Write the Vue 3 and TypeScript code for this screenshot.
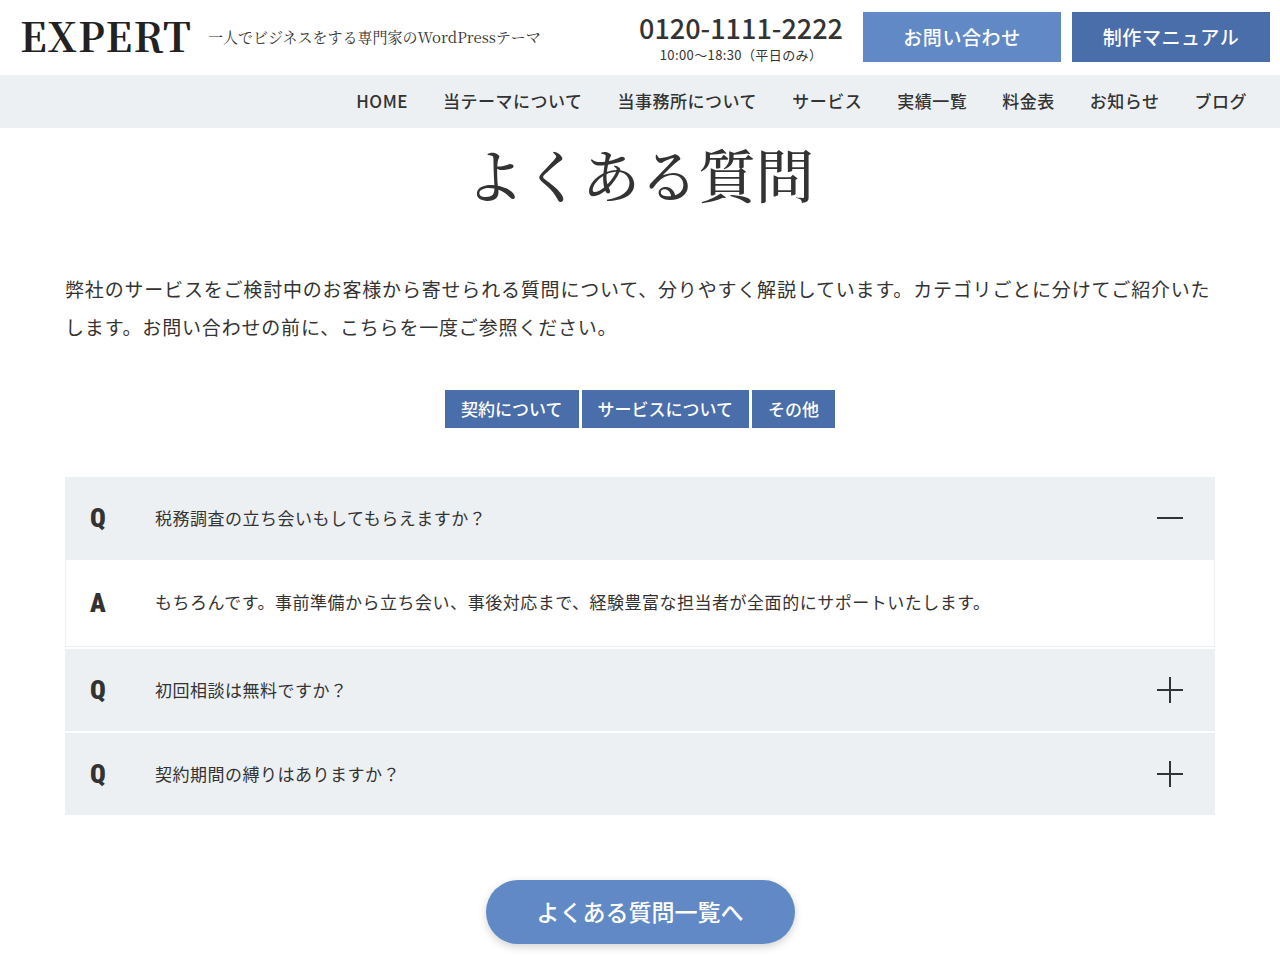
<script setup lang="ts">
import { ref } from 'vue'

interface LinkItem {
  label: string
  href: string
}

interface Faq {
  id: string
  question: string
  answer: string
}

const navItems: LinkItem[] = [
  { label: 'HOME', href: '#home' },
  { label: '当テーマについて', href: '#theme' },
  { label: '当事務所について', href: '#office' },
  { label: 'サービス', href: '#service' },
  { label: '実績一覧', href: '#works' },
  { label: '料金表', href: '#price' },
  { label: 'お知らせ', href: '#news' },
  { label: 'ブログ', href: '#blog' },
]

const categories: LinkItem[] = [
  { label: '契約について', href: '#contract' },
  { label: 'サービスについて', href: '#about-service' },
  { label: 'その他', href: '#other' },
]

const faqs: Faq[] = [
  {
    id: 'audit',
    question: '税務調査の立ち会いもしてもらえますか？',
    answer:
      'もちろんです。事前準備から立ち会い、事後対応まで、経験豊富な担当者が全面的にサポートいたします。',
  },
  { id: 'first', question: '初回相談は無料ですか？', answer: '' },
  { id: 'term', question: '契約期間の縛りはありますか？', answer: '' },
]

const openId = ref<string>('audit')

function toggle(id: string): void {
  openId.value = openId.value === id ? '' : id
}
</script>

<template>
  <div class="page">
    <header class="header">
      <a class="logo" href="#home">EXPERT</a>
      <p class="tagline">一人でビジネスをする専門家のWordPressテーマ</p>
      <div class="tel">
        <a class="tel-number" href="tel:012011112222">0120-1111-2222</a>
        <span class="tel-hours">10:00〜18:30（平日のみ）</span>
      </div>
      <div class="header-actions">
        <a class="header-button" href="#contact">お問い合わせ</a>
        <a class="header-button dark" href="#manual">制作マニュアル</a>
      </div>
    </header>

    <nav class="nav">
      <a v-for="item in navItems" :key="item.href" class="nav-link" :href="item.href">{{ item.label }}</a>
    </nav>

    <main class="main">
      <h1 class="title">よくある質問</h1>
      <p class="lead">
        弊社のサービスをご検討中のお客様から寄せられる質問について、分りやすく解説しています。カテゴリごとに分けてご紹介いたします。お問い合わせの前に、こちらを一度ご参照ください。
      </p>

      <div class="categories">
        <a v-for="c in categories" :key="c.href" class="category" :href="c.href">{{ c.label }}</a>
      </div>

      <div class="faq-list">
        <section v-for="faq in faqs" :key="faq.id" class="faq">
          <button
            class="question"
            type="button"
            :aria-expanded="openId === faq.id"
            @click="toggle(faq.id)"
          >
            <span class="mark">Q</span>
            <span class="text">{{ faq.question }}</span>
            <svg class="sign" viewBox="0 0 26 26" aria-hidden="true">
              <path d="M0 13H26" />
              <path v-if="openId !== faq.id" d="M13 0V26" />
            </svg>
          </button>
          <div v-if="openId === faq.id && faq.answer" class="answer">
            <span class="mark">A</span>
            <p class="text">{{ faq.answer }}</p>
          </div>
        </section>
      </div>

      <a class="more" href="#faq">よくある質問一覧へ</a>
    </main>
  </div>
</template>

<style>
body {
  margin: 0;
  background: #fff;
}
</style>

<style scoped>
.page {
  color: #333;
  font-family: "Noto Sans CJK JP", sans-serif;
  font-size: 17px;
}

.page a {
  color: inherit;
  text-decoration: none;
}

.page p {
  margin: 0;
}

.header {
  display: flex;
  align-items: center;
  padding: 10px 10px 11px 20px;
  white-space: nowrap;
}

.page .logo {
  padding-bottom: 4px;
  color: #222;
  font-family: "Noto Serif CJK JP", "Liberation Serif", serif;
  font-size: 40px;
  font-weight: 700;
  line-height: 46px;
  letter-spacing: 0.03em;
}

.tagline {
  padding: 0 0 2px 16px;
  font-family: "Noto Serif CJK JP", "Liberation Serif", "Noto Sans CJK JP", serif;
  font-size: 15px;
}

.tel {
  display: flex;
  flex-direction: column;
  align-items: center;
  margin-left: auto;
}

.tel-number {
  font-size: 27px;
  font-weight: 500;
  line-height: 36px;
}

.tel-hours {
  font-size: 13px;
  line-height: 18px;
  letter-spacing: 0.03em;
}

.header-actions {
  display: flex;
  gap: 11px;
  margin-left: 20px;
}

.page .header-button {
  width: 198px;
  background: #6189c5;
  color: #fff;
  font-size: 19px;
  font-weight: 500;
  line-height: 50px;
  letter-spacing: 0.03em;
  text-align: center;
}

.page .header-button.dark {
  background: #4a6ea9;
}

.nav {
  display: flex;
  justify-content: flex-end;
  gap: 35px;
  padding: 0 33px 2px;
  background: #ecf0f3;
  font-weight: 500;
  line-height: 51px;
  letter-spacing: 0.03em;
  white-space: nowrap;
}

.main {
  display: flex;
  flex-direction: column;
  max-width: 1150px;
  margin: 0 auto;
}

.title {
  margin: 0;
  padding: 5px 0 57px;
  font-family: "Noto Serif CJK JP", "Noto Sans CJK JP", serif;
  font-size: 58px;
  font-weight: 500;
  line-height: 80px;
  text-align: center;
}

.lead {
  font-size: 19px;
  line-height: 38px;
  letter-spacing: 0.043em;
}

.categories {
  display: flex;
  justify-content: center;
  gap: 3px;
  padding: 44px 0 49px;
}

.page .category {
  padding: 0 16px;
  background: #4a6ea9;
  color: #fff;
  font-weight: 500;
  line-height: 38px;
}

.faq-list {
  display: flex;
  flex-direction: column;
  gap: 2px;
}

.question,
.answer {
  display: flex;
  align-items: center;
  box-sizing: border-box;
  width: 100%;
  padding: 0 31px 0 24px;
  color: inherit;
  font: inherit;
  letter-spacing: 0.03em;
  text-align: left;
}

.question {
  min-height: 82px;
  border: 1px solid #ecf0f3;
  background: #ecf0f3;
  cursor: pointer;
}

.answer {
  min-height: 88px;
  border: 1px solid #ecf0f3;
}

.mark {
  flex: 0 0 65px;
  font-family: "Roboto Condensed", "Liberation Sans Narrow", Roboto, sans-serif;
  font-size: 26px;
  font-weight: 900;
}

.text {
  flex: 1;
  padding-bottom: 2px;
}

.answer .text {
  padding-bottom: 4px;
}

.sign {
  width: 26px;
  height: 26px;
  fill: none;
  stroke: #333;
  stroke-width: 2;
}

.page .more {
  align-self: center;
  margin: 65px 0 16px;
  padding: 0 51px 2px;
  border-radius: 32px;
  background: #6189c5;
  box-shadow: 0 3px 8px rgba(0, 0, 0, 0.18);
  color: #fff;
  font-size: 23px;
  font-weight: 500;
  line-height: 62px;
}
</style>
